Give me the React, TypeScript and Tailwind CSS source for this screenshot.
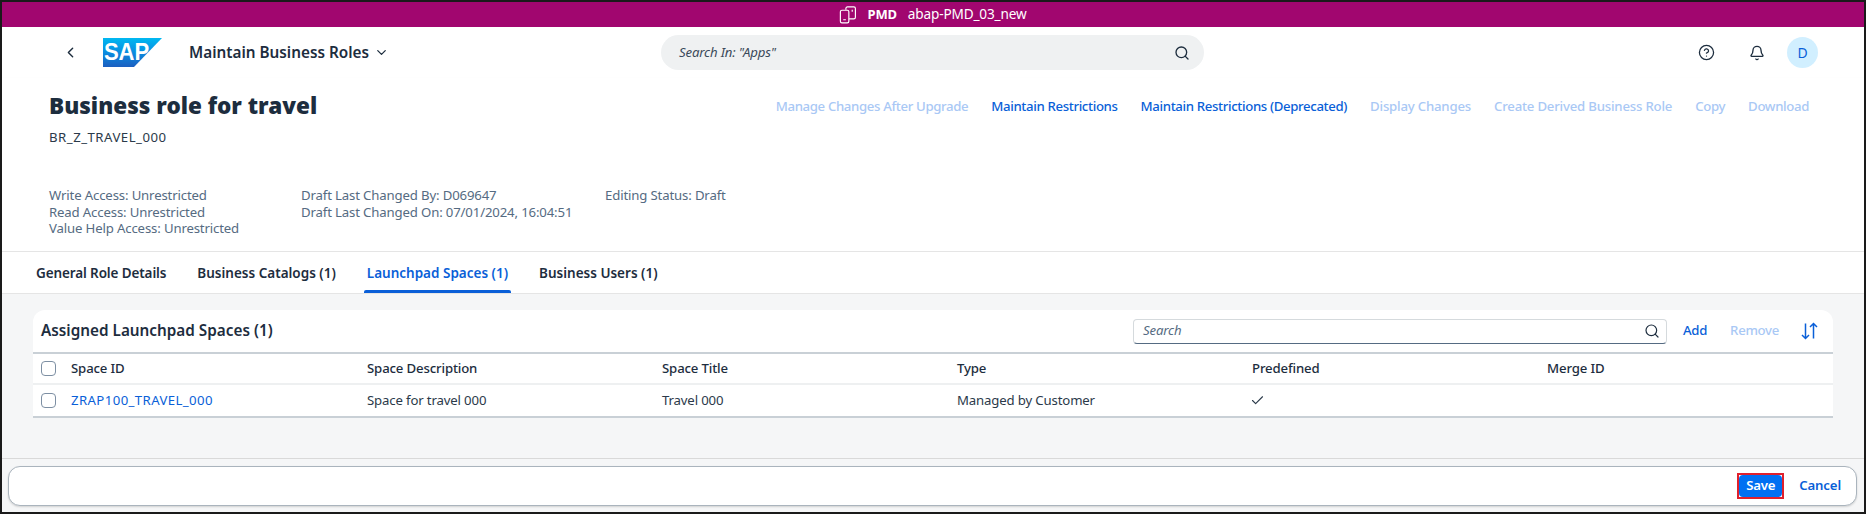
import React from "react";
import { ChevronLeft, ChevronDown, Search, CircleHelp, Bell, Check } from "lucide-react";

const font = { fontFamily: '"Noto Sans", "Open Sans", Arial, sans-serif' };

function Action({ label, on, wide }: { label: string; on?: boolean; wide?: boolean }) {
  return (
    <span className={`${on ? "text-[#0a5fd8]" : "text-[#a9c8f5]"} font-medium ${wide ? "tracking-[-0.2px]" : ""}`}>{label}</span>
  );
}

function Box() {
  return <span className="block w-[15px] h-[15px] rounded-[4px] border border-[#7d8fa3] bg-white" />;
}

const cols = "grid grid-cols-[38px_296px_295px_295px_295px_295px_1fr] items-center";

export default function App() {
  return (
    <div
      style={font}
      className="w-[1866px] h-[514px] border-2 border-[#1a1a1a] flex flex-col overflow-hidden bg-white text-[#1d2d3e] text-[13.2px] tracking-[-0.15px]"
    >
      <div className="h-[25px] bg-[#a1066f] flex items-center justify-center text-white gap-[10px] shrink-0">
        <svg width="18" height="18" viewBox="0 0 16 17" fill="none" stroke="white" strokeWidth="1.1">
          <rect x="0.8" y="4" width="8" height="12" rx="1.5" />
          <path d="M6 3.5V2.3a1.5 1.5 0 0 1 1.5-1.5h6a1.5 1.5 0 0 1 1.5 1.5v8.4a1.5 1.5 0 0 1-1.5 1.5H9" />
          <path d="M3.5 13h2.5M12 3.5v2" />
        </svg>
        <span className="font-bold text-[13px]">PMD</span>
        <span className="ml-[1px] text-[13.6px]">abap-PMD_03_new</span>
      </div>

      <div className="h-[51px] flex items-center shrink-0">
        <div className="w-[659px] pl-[60px] flex items-center shrink-0">
          <ChevronLeft size={17} strokeWidth={2} className="text-[#1d2d3e]" />
          <svg width="59" height="29" viewBox="0 0 59 29" className="ml-[24px]">
            <defs>
              <linearGradient id="sapg" x1="0" y1="0" x2="0" y2="1">
                <stop offset="0" stopColor="#00b8f1" />
                <stop offset="0.5" stopColor="#0a8ce0" />
                <stop offset="1" stopColor="#1c5fc0" />
              </linearGradient>
            </defs>
            <polygon points="0,0 59,0 31,29 0,29" fill="url(#sapg)" />
            <text x="1" y="22" fill="white" fontSize="24" fontWeight="700" textLength="45" lengthAdjust="spacingAndGlyphs" fontFamily="Liberation Sans, sans-serif">SAP</text>
          </svg>
          <span className="ml-[27px] text-[15.3px] font-semibold tracking-normal">Maintain Business Roles</span>
          <ChevronDown size={15} strokeWidth={2} className="ml-[5px]" />
        </div>
        <div className="w-[543px] h-[35px] rounded-full bg-[#eff1f2] flex items-center justify-between pl-[18px] pr-[14px]">
          <span className="italic text-[#3b4a5a]">Search In: "Apps"</span>
          <Search size={16} strokeWidth={2} />
        </div>
        <CircleHelp size={17} strokeWidth={1.8} className="ml-[494px]" />
        <Bell size={16} strokeWidth={2} className="ml-[34px]" />
        <span className="ml-[22px] w-[31px] h-[31px] rounded-full bg-[#d1efff] text-[#0a5fd8] flex items-center justify-center text-[14px]">D</span>
      </div>

      <div className="h-[174px] shrink-0 border-b border-[#e5e5e5] shadow-[0_1px_2px_rgba(0,0,0,0.08)] relative z-10 bg-white pl-[47px] pr-[55px] pt-[13px]">
        <div className="flex items-center justify-between h-[30px]">
          <h1 className="text-[22.5px] font-black tracking-normal leading-none">Business role for travel</h1>
          <div className="flex gap-[23px] tracking-[-0.35px] mt-[2px]">
            <Action label="Manage Changes After Upgrade" />
            <Action label="Maintain Restrictions" on />
            <Action label="Maintain Restrictions (Deprecated)" on />
            <Action label="Display Changes" wide />
            <Action label="Create Derived Business Role" wide />
            <Action label="Copy" />
            <Action label="Download" />
          </div>
        </div>
        <div className="mt-[7px] leading-[18px] text-[#2b3a4a] tracking-[0.5px]">BR_Z_TRAVEL_000</div>
        <div className="mt-[41px] flex text-[#556b82] leading-[16.5px]">
          <div className="w-[252px]">
            <div>Write Access: Unrestricted</div>
            <div>Read Access: Unrestricted</div>
            <div>Value Help Access: Unrestricted</div>
          </div>
          <div className="w-[304px]">
            <div>Draft Last Changed By: D069647</div>
            <div>Draft Last Changed On: 07/01/2024, 16:04:51</div>
          </div>
          <div>Editing Status: Draft</div>
        </div>
      </div>

      <div className="h-[42px] shrink-0 flex items-stretch bg-white pl-[34px] gap-[31px] font-semibold border-b border-[#e5e5e5] relative z-10 text-[13.5px] tracking-normal">
        <span className="flex items-center pt-[2px] tracking-[-0.12px]">General Role Details</span>
        <span className="flex items-center pt-[2px]">Business Catalogs (1)</span>
        <span className="flex items-center pt-[2px] text-[#0a5fd8] relative px-[3px] -mx-[3px]">
          Launchpad Spaces (1)
          <span className="absolute left-0 right-0 bottom-0 h-[3px] bg-[#0a5fd8] rounded-t-[2px]" />
        </span>
        <span className="flex items-center pt-[2px]">Business Users (1)</span>
      </div>

      <div className="flex-1 bg-[#f5f6f7] pl-[31px] pt-[16px] border-b border-[#d9d9d9]">
        <div className="w-[1800px] bg-white rounded-t-[12px]">
          <div className="h-[42px] flex items-center pl-[8px] pr-[15px]">
            <span className="text-[15.3px] font-semibold tracking-normal -mt-[2px]">Assigned Launchpad Spaces (1)</span>
            <div className="ml-auto w-[534px] h-[25px] rounded-[4px] border border-[#d5dadd] border-b-[#556b82] flex items-center justify-between pl-[9px] pr-[6px]">
              <span className="italic text-[#556b82]">Search</span>
              <Search size={16} strokeWidth={1.8} />
            </div>
            <span className="ml-[16px] font-medium text-[#0a5fd8] tracking-[-0.3px]">Add</span>
            <span className="ml-[23px] font-medium text-[#a9c8f5] tracking-[-0.3px]">Remove</span>
            <svg width="17" height="18" viewBox="0 0 17 18" fill="none" stroke="#0a5fd8" strokeWidth="1.5" className="ml-[22px]">
              <path d="M4.5 1.5v15M1 13l3.5 3.5L8 13" />
              <path d="M12.5 16.5v-15M9 5l3.5-3.5L16 5" />
            </svg>
          </div>
          <div className={`${cols} h-[33px] border-t-2 border-b-2 border-t-[#c9d0d6] border-b-[#eef0f1] font-medium`}>
            <span className="pl-[8px]"><Box /></span>
            <span>Space ID</span>
            <span>Space Description</span>
            <span>Space Title</span>
            <span>Type</span>
            <span>Predefined</span>
            <span>Merge ID</span>
          </div>
          <div className={`${cols} h-[33px] border-b-2 border-[#c9d0d6] text-[#2b3a4a]`}>
            <span className="pl-[8px]"><Box /></span>
            <span className="text-[#0a5fd8] tracking-[0.4px]">ZRAP100_TRAVEL_000</span>
            <span>Space for travel 000</span>
            <span>Travel 000</span>
            <span>Managed by Customer</span>
            <span className="-ml-[2px]"><Check size={15} strokeWidth={1.8} /></span>
            <span />
          </div>
        </div>
      </div>

      <div className="h-[53px] shrink-0 bg-[#f5f6f7] pl-[6px] pt-[7px]">
        <div className="w-[1849px] h-[40px] bg-white rounded-[12px] border border-[#aab4bd] shadow-[0_1px_2px_rgba(0,0,0,0.15)] flex items-center justify-end pr-[15px] font-semibold">
          <span className="border-2 border-[#e0202c]">
            <span className="flex w-[43px] h-[22px] bg-[#0070f2] text-white rounded-[4px] items-center justify-center">Save</span>
          </span>
          <span className="ml-[15px] text-[#0a5fd8]">Cancel</span>
        </div>
      </div>
    </div>
  );
}
